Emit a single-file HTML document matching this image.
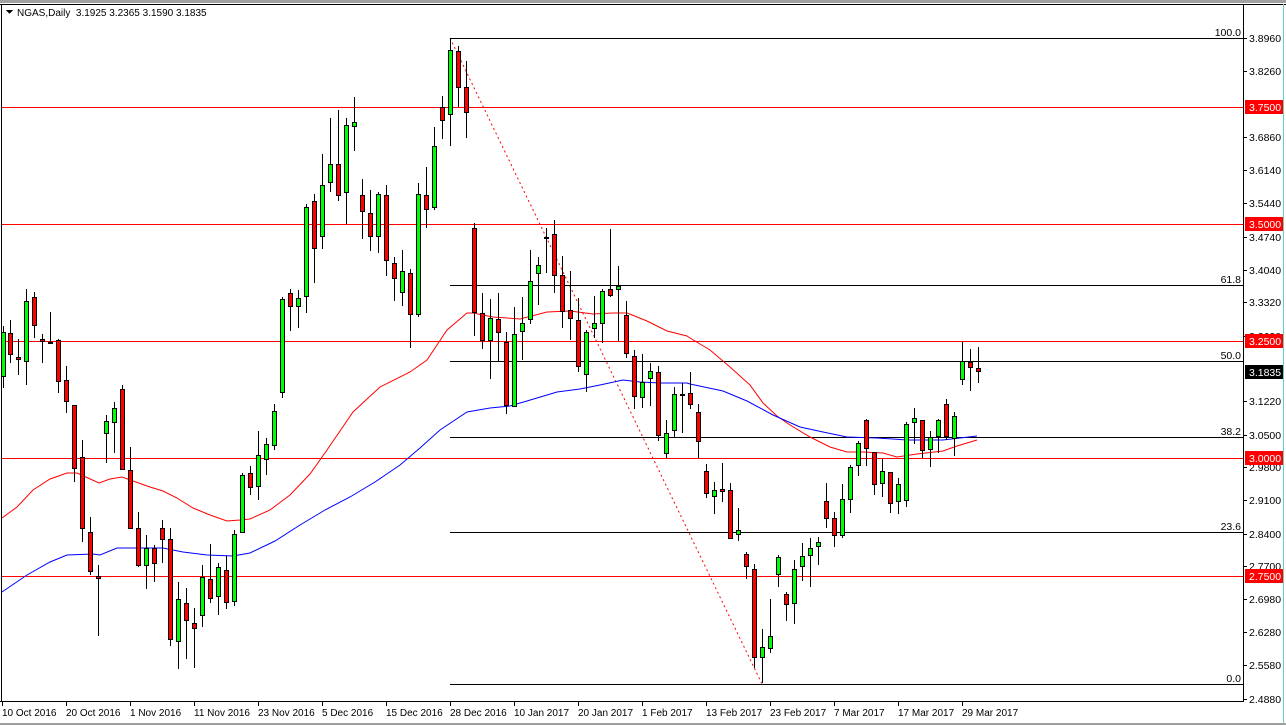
<!DOCTYPE html>
<html><head><meta charset="utf-8"><style>
html,body{margin:0;padding:0;background:#fff;}
svg{display:block;font-family:"Liberation Sans",sans-serif;font-size:10.5px;}
.g{fill:#00ff00;stroke:#000;}
.r{fill:#ff0000;stroke:#000;}
.s{font-size:10px;}
</style></head><body>
<svg width="1286" height="725" viewBox="0 0 1286 725" xmlns="http://www.w3.org/2000/svg" shape-rendering="crispEdges">
<rect x="0" y="0" width="1286" height="725" fill="#fff"/>
<rect x="0" y="0" width="1286" height="3" fill="#a0a0a0"/>
<line x1="0" y1="4.5" x2="1286" y2="4.5" stroke="#000"/>
<line x1="1.5" y1="4" x2="1.5" y2="702" stroke="#000"/>
<line x1="0" y1="701.5" x2="1243" y2="701.5" stroke="#000"/>
<line x1="1243.5" y1="4" x2="1243.5" y2="702" stroke="#000"/>
<line x1="1283.5" y1="4" x2="1283.5" y2="725" stroke="#6cc" />
<rect x="0" y="723" width="1286" height="2" fill="#a0a0a0"/>

<g stroke="#ff0000" stroke-width="1">
<line x1="2" y1="107.5" x2="1243" y2="107.5"/>
<line x1="2" y1="224.5" x2="1243" y2="224.5"/>
<line x1="2" y1="341.5" x2="1243" y2="341.5"/>
<line x1="2" y1="458.5" x2="1243" y2="458.5"/>
<line x1="2" y1="576.5" x2="1243" y2="576.5"/>
</g>
<g stroke="#000">
<line x1="450" y1="38.5" x2="1243" y2="38.5"/>
<line x1="450" y1="285.5" x2="1243" y2="285.5"/>
<line x1="450" y1="361.5" x2="1243" y2="361.5"/>
<line x1="450" y1="437.5" x2="1243" y2="437.5"/>
<line x1="450" y1="532.5" x2="1243" y2="532.5"/>
<line x1="450" y1="684.5" x2="1243" y2="684.5"/>
</g>
<g fill="#000" text-anchor="end">
<text x="1241" y="36">100.0</text>
<text x="1241" y="283">61.8</text>
<text x="1241" y="359">50.0</text>
<text x="1241" y="435">38.2</text>
<text x="1241" y="530">23.6</text>
<text x="1241" y="682">0.0</text>
</g>
<line x1="450" y1="38" x2="762" y2="684" stroke="#ff0000" stroke-dasharray="2,3" shape-rendering="auto"/>

<polyline fill="none" stroke="#ff0000" shape-rendering="auto" points="2,518 17,507 33,490 50,479 67,473 77,473 88,478 99,483 110,479 122,477 133,481 150,487 163,491 177,498 193,508 210,515 227,521 240,520 250,519 270,510 290,495 310,474 327,450 353,412 380,387 410,372 427,360 447,330 467,313 473,313 493,317 520,319 547,312 570,311 593,314 613,313 627,313 647,321 667,331 687,336 690,338 710,350 730,367 750,385 763,403 777,416 790,425 810,437 830,447 847,452 863,452 883,453 897,457 917,454 943,451 957,446 977,440"/>
<polyline fill="none" stroke="#0000ff" shape-rendering="auto" points="2,592 27,575 50,562 67,555 93,554 100,555 117,548 133,548 163,548 183,552 207,555 233,556 250,553 275,541 300,525 325,510 350,497 375,482 400,465 420,448 440,430 467,412 490,408 510,406 537,398 557,392 580,389 600,385 623,380 640,382 660,383 687,383 690,384 723,391 747,401 773,415 800,427 823,432 847,437 877,438 907,440 943,440 977,436"/>

<path stroke="#000" fill="none" d="M3.5 326V388M10.5 320V363M18.5 339V375M26.5 289V385M34.5 292V338M42.5 334V363M50.5 312V344M58.5 339V393M66.5 366V413M74.5 405V482M82.5 440V542M90.5 517V575M98.5 565V636M106.5 415V463M114.5 402V453M122.5 385V470M130.5 447V529M138.5 512V567M146.5 535V589M154.5 545V582M162.5 520V563M170.5 528V646M178.5 582V669M186.5 588V659M194.5 608V668M202.5 565V627M210.5 544V603M218.5 563V615M226.5 556V609M234.5 530V606M242.5 473V533M250.5 466V495M258.5 431V500M266.5 438V475M274.5 404V450M282.5 297V398M290.5 289V331M298.5 290V328M306.5 204V313M314.5 194V283M322.5 154V249M330.5 118V192M338.5 110V201M346.5 118V224M354.5 97V151M362.5 179V239M370.5 190V251M378.5 192V253M386.5 185V276M394.5 257V301M402.5 250V306M410.5 269V348M418.5 183V317M426.5 167V228M434.5 127V210M442.5 96V139M450.5 38V146M458.5 46V107M466.5 61V138M474.5 223V336M482.5 293V349M490.5 299V379M498.5 293V361M506.5 332V414M514.5 307V407M522.5 297V360M530.5 250V324M538.5 257V305M546.5 228V273M554.5 220V293M562.5 256V328M570.5 271V340M578.5 298V372M586.5 330V392M594.5 296V338M602.5 289V343M610.5 229V297M618.5 266V341M626.5 301V358M634.5 350V409M642.5 354V408M650.5 363V406M658.5 366V441M666.5 420V458M674.5 387V437M682.5 383V433M690.5 372V409M698.5 404V458M706.5 464V498M714.5 482V514M722.5 463V502M730.5 483V539M738.5 508V541M746.5 552V579M754.5 564V668M762.5 629V683M770.5 599V653M778.5 555V587M786.5 592V621M794.5 560V624M802.5 543V581M810.5 538V587M818.5 537V565M826.5 483V528M834.5 512V547M842.5 484V538M850.5 465V513M858.5 441V476M866.5 419V466M874.5 452V495M882.5 459V497M890.5 472V513M898.5 478V514M906.5 422V507M914.5 408V444M922.5 420V458M930.5 431V467M938.5 419V453M946.5 399V440M954.5 412V456M962.5 342V385M970.5 349V391M978.5 347V383"/>

<g>
<rect class="g" x="1.5" y="332.5" width="4" height="44"/>
<rect class="r" x="8.5" y="333.5" width="4" height="21"/>
<rect class="r" x="16.5" y="357.5" width="4" height="2"/>
<rect class="g" x="24.5" y="301.5" width="4" height="60"/>
<rect class="r" x="32.5" y="297.5" width="4" height="28"/>
<rect class="r" x="40.5" y="339.5" width="4" height="2"/>
<rect class="g" x="48.5" y="342.5" width="4" height="1"/>
<rect class="r" x="56.5" y="340.5" width="4" height="41"/>
<rect class="r" x="64.5" y="380.5" width="4" height="21"/>
<rect class="r" x="72.5" y="405.5" width="4" height="63"/>
<rect class="r" x="80.5" y="457.5" width="4" height="71"/>
<rect class="r" x="88.5" y="532.5" width="4" height="39"/>
<rect class="r" x="96.5" y="576.5" width="4" height="2"/>
<rect class="g" x="104.5" y="421.5" width="4" height="12"/>
<rect class="g" x="112.5" y="408.5" width="4" height="14"/>
<rect class="r" x="120.5" y="389.5" width="4" height="80"/>
<rect class="r" x="128.5" y="470.5" width="4" height="58"/>
<rect class="r" x="136.5" y="528.5" width="4" height="37"/>
<rect class="g" x="144.5" y="548.5" width="4" height="17"/>
<rect class="r" x="152.5" y="548.5" width="4" height="15"/>
<rect class="r" x="160.5" y="528.5" width="4" height="11"/>
<rect class="r" x="168.5" y="539.5" width="4" height="100"/>
<rect class="g" x="176.5" y="599.5" width="4" height="42"/>
<rect class="r" x="184.5" y="603.5" width="4" height="17"/>
<rect class="r" x="192.5" y="623.5" width="4" height="5"/>
<rect class="g" x="200.5" y="577.5" width="4" height="38"/>
<rect class="r" x="208.5" y="579.5" width="4" height="19"/>
<rect class="g" x="216.5" y="567.5" width="4" height="29"/>
<rect class="r" x="224.5" y="570.5" width="4" height="32"/>
<rect class="g" x="232.5" y="534.5" width="4" height="67"/>
<rect class="g" x="240.5" y="475.5" width="4" height="57"/>
<rect class="r" x="248.5" y="473.5" width="4" height="14"/>
<rect class="g" x="256.5" y="455.5" width="4" height="31"/>
<rect class="g" x="264.5" y="444.5" width="4" height="15"/>
<rect class="g" x="272.5" y="411.5" width="4" height="34"/>
<rect class="g" x="280.5" y="299.5" width="4" height="93"/>
<rect class="r" x="288.5" y="293.5" width="4" height="13"/>
<rect class="g" x="296.5" y="298.5" width="4" height="8"/>
<rect class="g" x="304.5" y="207.5" width="4" height="89"/>
<rect class="r" x="312.5" y="201.5" width="4" height="47"/>
<rect class="g" x="320.5" y="185.5" width="4" height="51"/>
<rect class="g" x="328.5" y="164.5" width="4" height="18"/>
<rect class="r" x="336.5" y="164.5" width="4" height="31"/>
<rect class="g" x="344.5" y="125.5" width="4" height="67"/>
<rect class="g" x="352.5" y="122.5" width="4" height="4"/>
<rect class="r" x="360.5" y="195.5" width="4" height="16"/>
<rect class="r" x="368.5" y="213.5" width="4" height="23"/>
<rect class="g" x="376.5" y="194.5" width="4" height="42"/>
<rect class="r" x="384.5" y="195.5" width="4" height="65"/>
<rect class="r" x="392.5" y="263.5" width="4" height="15"/>
<rect class="g" x="400.5" y="271.5" width="4" height="21"/>
<rect class="r" x="408.5" y="273.5" width="4" height="41"/>
<rect class="g" x="416.5" y="194.5" width="4" height="120"/>
<rect class="r" x="424.5" y="195.5" width="4" height="14"/>
<rect class="g" x="432.5" y="146.5" width="4" height="61"/>
<rect class="r" x="440.5" y="107.5" width="4" height="13"/>
<rect class="g" x="448.5" y="50.5" width="4" height="64"/>
<rect class="r" x="456.5" y="51.5" width="4" height="36"/>
<rect class="r" x="464.5" y="87.5" width="4" height="25"/>
<rect class="r" x="472.5" y="228.5" width="4" height="84"/>
<rect class="r" x="480.5" y="313.5" width="4" height="27"/>
<rect class="g" x="488.5" y="318.5" width="4" height="22"/>
<rect class="r" x="496.5" y="319.5" width="4" height="13"/>
<rect class="r" x="504.5" y="342.5" width="4" height="63"/>
<rect class="g" x="512.5" y="334.5" width="4" height="72"/>
<rect class="g" x="520.5" y="323.5" width="4" height="8"/>
<rect class="g" x="528.5" y="281.5" width="4" height="38"/>
<rect class="g" x="536.5" y="265.5" width="4" height="8"/>
<rect class="g" x="544.5" y="237.5" width="4" height="1"/>
<rect class="r" x="552.5" y="234.5" width="4" height="41"/>
<rect class="r" x="560.5" y="275.5" width="4" height="36"/>
<rect class="r" x="568.5" y="310.5" width="4" height="8"/>
<rect class="r" x="576.5" y="320.5" width="4" height="46"/>
<rect class="g" x="584.5" y="332.5" width="4" height="42"/>
<rect class="g" x="592.5" y="323.5" width="4" height="5"/>
<rect class="g" x="600.5" y="291.5" width="4" height="32"/>
<rect class="r" x="608.5" y="289.5" width="4" height="6"/>
<rect class="g" x="616.5" y="286.5" width="4" height="3"/>
<rect class="r" x="624.5" y="315.5" width="4" height="38"/>
<rect class="r" x="632.5" y="356.5" width="4" height="40"/>
<rect class="g" x="640.5" y="382.5" width="4" height="15"/>
<rect class="g" x="648.5" y="371.5" width="4" height="7"/>
<rect class="r" x="656.5" y="372.5" width="4" height="63"/>
<rect class="g" x="664.5" y="433.5" width="4" height="20"/>
<rect class="g" x="672.5" y="394.5" width="4" height="36"/>
<rect class="g" x="680.5" y="394.5" width="4" height="1"/>
<rect class="r" x="688.5" y="393.5" width="4" height="11"/>
<rect class="r" x="696.5" y="412.5" width="4" height="29"/>
<rect class="r" x="704.5" y="471.5" width="4" height="22"/>
<rect class="g" x="712.5" y="490.5" width="4" height="6"/>
<rect class="r" x="720.5" y="489.5" width="4" height="2"/>
<rect class="r" x="728.5" y="490.5" width="4" height="48"/>
<rect class="g" x="736.5" y="530.5" width="4" height="4"/>
<rect class="r" x="744.5" y="554.5" width="4" height="12"/>
<rect class="r" x="752.5" y="569.5" width="4" height="88"/>
<rect class="g" x="760.5" y="647.5" width="4" height="10"/>
<rect class="g" x="768.5" y="636.5" width="4" height="12"/>
<rect class="g" x="776.5" y="557.5" width="4" height="17"/>
<rect class="r" x="784.5" y="594.5" width="4" height="10"/>
<rect class="g" x="792.5" y="569.5" width="4" height="34"/>
<rect class="g" x="800.5" y="556.5" width="4" height="10"/>
<rect class="g" x="808.5" y="548.5" width="4" height="7"/>
<rect class="g" x="816.5" y="542.5" width="4" height="4"/>
<rect class="r" x="824.5" y="501.5" width="4" height="17"/>
<rect class="r" x="832.5" y="518.5" width="4" height="17"/>
<rect class="g" x="840.5" y="499.5" width="4" height="36"/>
<rect class="g" x="848.5" y="467.5" width="4" height="32"/>
<rect class="g" x="856.5" y="443.5" width="4" height="22"/>
<rect class="r" x="864.5" y="420.5" width="4" height="28"/>
<rect class="r" x="872.5" y="452.5" width="4" height="32"/>
<rect class="g" x="880.5" y="471.5" width="4" height="12"/>
<rect class="r" x="888.5" y="472.5" width="4" height="31"/>
<rect class="g" x="896.5" y="484.5" width="4" height="17"/>
<rect class="g" x="904.5" y="424.5" width="4" height="76"/>
<rect class="g" x="912.5" y="418.5" width="4" height="4"/>
<rect class="r" x="920.5" y="420.5" width="4" height="30"/>
<rect class="g" x="928.5" y="437.5" width="4" height="12"/>
<rect class="g" x="936.5" y="420.5" width="4" height="16"/>
<rect class="r" x="944.5" y="404.5" width="4" height="32"/>
<rect class="g" x="952.5" y="416.5" width="4" height="22"/>
<rect class="g" x="960.5" y="361.5" width="4" height="18"/>
<rect class="r" x="968.5" y="362.5" width="4" height="5"/>
<rect class="r" x="976.5" y="368.5" width="4" height="3"/>
</g>

<g stroke="#000">
<path d="M1243 38.5h4M1243 71.5h4M1243 137.5h4M1243 170.5h4M1243 203.5h4M1243 237.5h4M1243 270.5h4M1243 302.5h4M1243 336.5h4M1243 401.5h4M1243 435.5h4M1243 467.5h4M1243 500.5h4M1243 534.5h4M1243 566.5h4M1243 599.5h4M1243 632.5h4M1243 665.5h4M1243 699.5h4"/>
</g>
<g fill="#000">
<text x="1249" y="42">3.8960</text>
<text x="1249" y="75">3.8260</text>
<text x="1249" y="141">3.6860</text>
<text x="1249" y="174">3.6140</text>
<text x="1249" y="207">3.5440</text>
<text x="1249" y="241">3.4740</text>
<text x="1249" y="274">3.4040</text>
<text x="1249" y="306">3.3320</text>
<text x="1249" y="340">3.2620</text>
<text x="1249" y="405">3.1220</text>
<text x="1249" y="439">3.0500</text>
<text x="1249" y="471">2.9800</text>
<text x="1249" y="504">2.9100</text>
<text x="1249" y="538">2.8400</text>
<text x="1249" y="570">2.7700</text>
<text x="1249" y="603">2.6980</text>
<text x="1249" y="636">2.6280</text>
<text x="1249" y="669">2.5580</text>
<text x="1249" y="703">2.4880</text>
</g>
<g>
<rect x="1245" y="100" width="38" height="14" fill="#ff0000"/>
<rect x="1245" y="217" width="38" height="14" fill="#ff0000"/>
<rect x="1245" y="334" width="38" height="14" fill="#ff0000"/>
<rect x="1245" y="451" width="38" height="14" fill="#ff0000"/>
<rect x="1245" y="569" width="38" height="14" fill="#ff0000"/>
<rect x="1245" y="365" width="38" height="14" fill="#000"/>
</g>
<g fill="#fff">
<text x="1249" y="111">3.7500</text>
<text x="1249" y="228">3.5000</text>
<text x="1249" y="345">3.2500</text>
<text x="1249" y="462">3.0000</text>
<text x="1249" y="580">2.7500</text>
<text x="1249" y="376">3.1835</text>
</g>

<path stroke="#000" d="M2.5 702v4M66.5 702v4M130.5 702v4M194.5 702v4M258.5 702v4M322.5 702v4M386.5 702v4M450.5 702v4M514.5 702v4M578.5 702v4M642.5 702v4M706.5 702v4M770.5 702v4M834.5 702v4M898.5 702v4M962.5 702v4"/>
<g fill="#000" class="s">
<text x="2" y="716">10 Oct 2016</text>
<text x="66" y="716">20 Oct 2016</text>
<text x="130" y="716">1 Nov 2016</text>
<text x="194" y="716">11 Nov 2016</text>
<text x="258" y="716">23 Nov 2016</text>
<text x="322" y="716">5 Dec 2016</text>
<text x="386" y="716">15 Dec 2016</text>
<text x="450" y="716">28 Dec 2016</text>
<text x="514" y="716">10 Jan 2017</text>
<text x="578" y="716">20 Jan 2017</text>
<text x="642" y="716">1 Feb 2017</text>
<text x="706" y="716">13 Feb 2017</text>
<text x="770" y="716">23 Feb 2017</text>
<text x="834" y="716">7 Mar 2017</text>
<text x="898" y="716">17 Mar 2017</text>
<text x="962" y="716">29 Mar 2017</text>
</g>

<path d="M6 10h7l-3.5 4z" fill="#000"/>
<text x="17" y="16" fill="#000" class="s" xml:space="preserve">NGAS,Daily  3.1925 3.2365 3.1590 3.1835</text>
</svg>
</body></html>
